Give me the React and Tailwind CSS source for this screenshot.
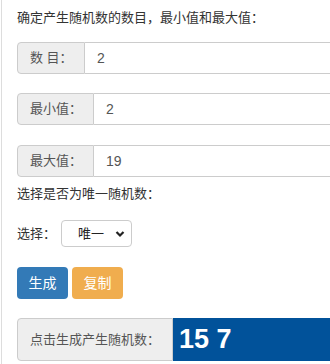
import React from "react";

const font = { fontFamily: '"Liberation Sans", "Noto Sans CJK SC", sans-serif' };

function Group({ label, value, addonW, mt }) {
  return (
    <div className={`flex h-[32px] w-[360px] ${mt}`}>
      <div
        className={`flex items-center ${addonW} shrink-0 rounded-l-[4px] border border-[#ccc] bg-[#eee] pl-[12px] text-[13px] text-[#555]`}
      >
        {label}
      </div>
      <div className="flex flex-1 items-center border border-l-0 border-[#ccc] bg-white pl-[12px] text-[14px] text-[#555]">
        {value}
      </div>
    </div>
  );
}

export default function App() {
  return (
    <div className="h-[364px] w-[330px] overflow-hidden bg-white" style={font}>
      <div className="ml-[1px] h-full border-l border-[#ddd] pl-[15px] pt-[8px] text-[#333]">
        <div className="text-[13px] leading-[20px]">确定产生随机数的数目，最小值和最大值：</div>
        <Group label="数 目：" value="2" addonW="w-[68px]" mt="mt-[14px]" />
        <Group label="最小值：" value="2" addonW="w-[77px]" mt="mt-[19px]" />
        <Group label="最大值：" value="19" addonW="w-[77px]" mt="mt-[20px]" />
        <div className="mt-[7px] text-[13px] leading-[20px]">选择是否为唯一随机数：</div>
        <div className="mt-[16px] flex h-[27px] items-center">
          <span className="text-[13px]">选择：</span>
          <div className="ml-[5px] flex h-[27px] w-[71px] items-center rounded-[4px] border border-[#ccc] bg-white pl-[16px] text-[13px] text-[#222]">
            <span>唯一</span>
            <svg className="ml-auto mr-[6px]" width="10" height="8" viewBox="0 0 10 8">
              <path d="M1.5 2 L5 5.5 L8.5 2" fill="none" stroke="#222" strokeWidth="2.2" />
            </svg>
          </div>
        </div>
        <div className="mt-[20px] flex h-[32px] gap-[4px]">
          <div className="flex w-[51px] items-center justify-center rounded-[4px] bg-[#337ab7] text-[14px] text-white">
            生成
          </div>
          <div className="flex w-[51px] items-center justify-center rounded-[4px] bg-[#f0ad4e] text-[14px] text-white">
            复制
          </div>
        </div>
        <div className="mt-[19px] flex h-[43px] w-[360px]">
          <div className="flex w-[156px] shrink-0 items-center rounded-l-[4px] border border-[#ccc] bg-[#eee] pl-[12px] text-[13px] text-[#555]">
            点击生成产生随机数：
          </div>
          <div className="flex flex-1 items-center bg-[#01529a] pl-[6px] text-[27px] font-bold text-white">
            15 7
          </div>
        </div>
      </div>
    </div>
  );
}
